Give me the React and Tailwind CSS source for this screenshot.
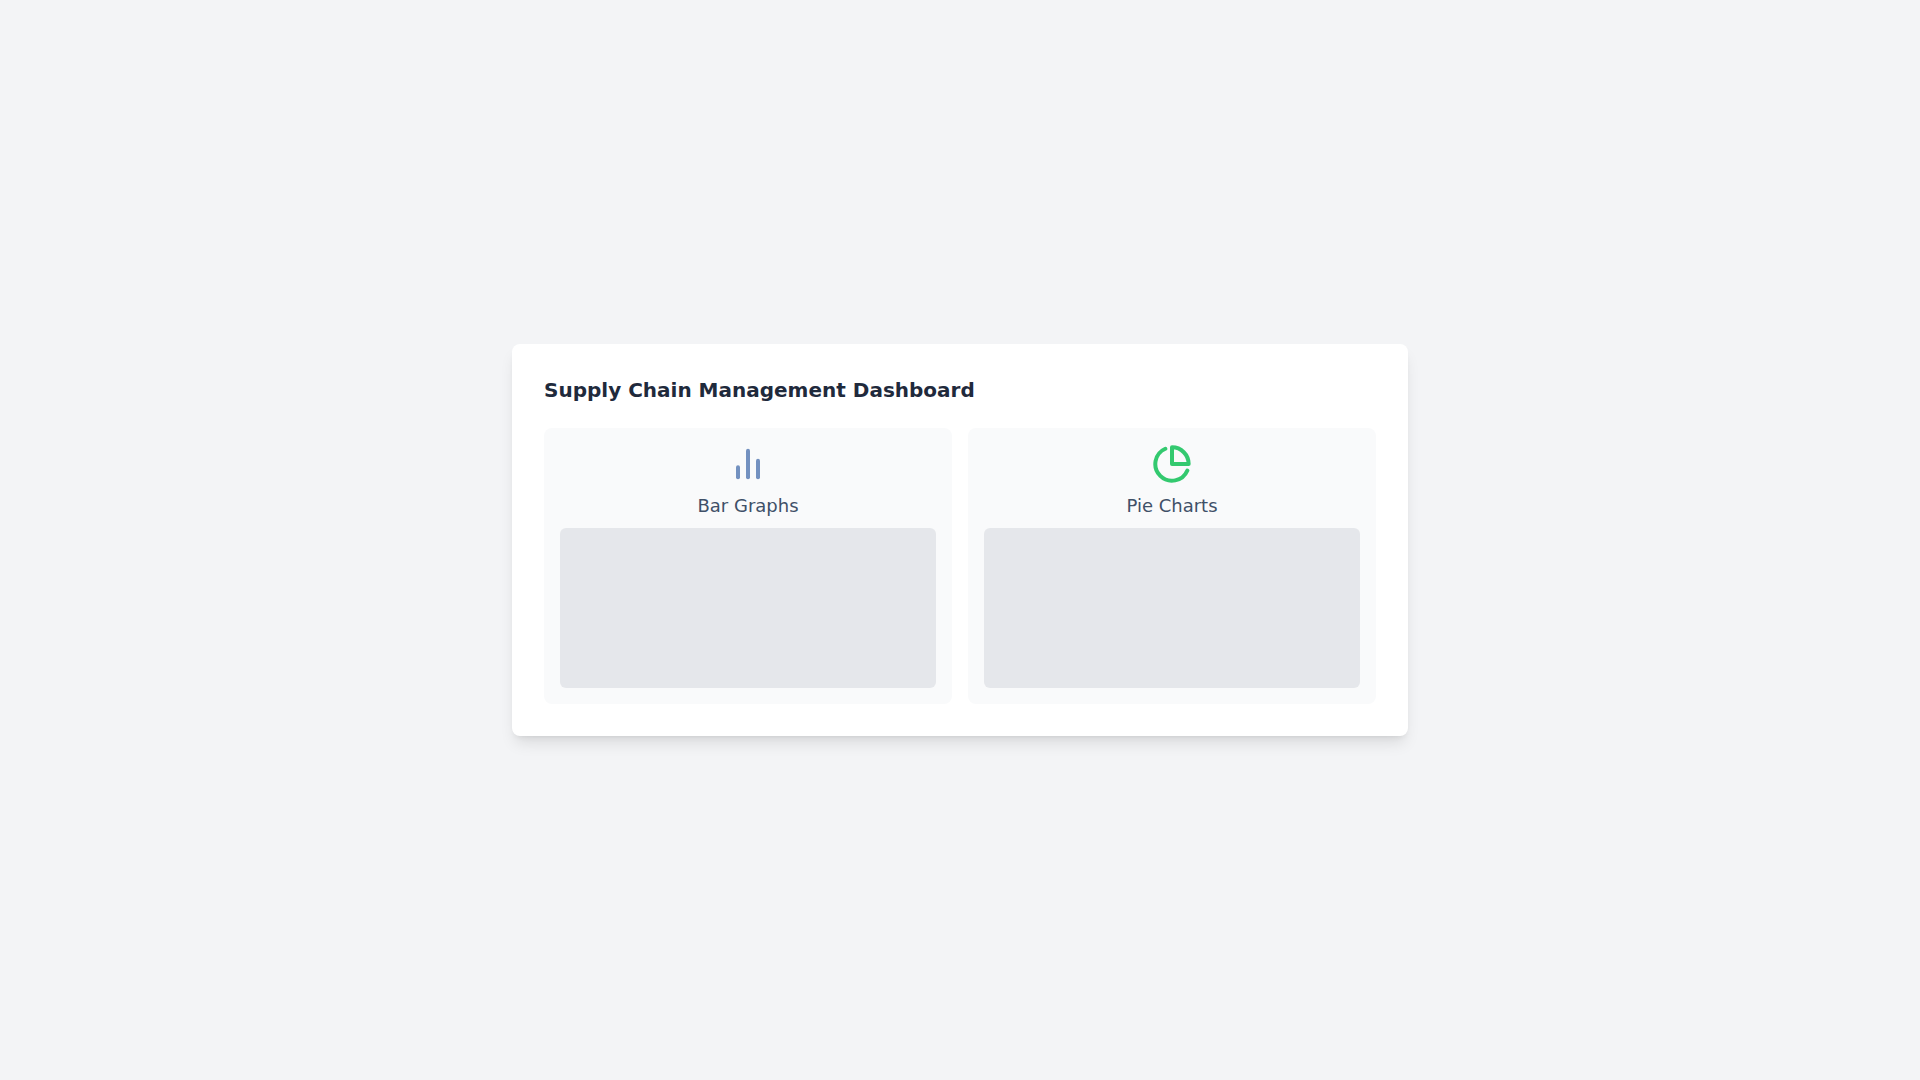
import React from 'react';

const BarIcon = () => (
    <svg className="w-10 h-10 text-[#7391c0]" viewBox="0 0 24 24" fill="none" stroke="currentColor" strokeWidth="2.4" strokeLinecap="round" strokeLinejoin="round">
        <line x1="18" y1="20" x2="18" y2="10" />
        <line x1="12" y1="20" x2="12" y2="4" />
        <line x1="6" y1="20" x2="6" y2="14" />
    </svg>
);

const PieIcon = () => (
    <svg className="w-10 h-10 text-[#33c96f]" viewBox="0 0 24 24" fill="none" stroke="currentColor" strokeWidth="2.4" strokeLinecap="round" strokeLinejoin="round">
        <path d="M21.21 15.89A10 10 0 1 1 8 2.83" />
        <path d="M22 12A10 10 0 0 0 12 2v10z" />
    </svg>
);

const Panel = ({ icon, label }) => (
    <div className="bg-gray-50 rounded-lg p-4 flex flex-col items-center">
        {icon}
        <h3 className="mt-2 text-lg font-normal text-[#3f5068]">{label}</h3>
        <div className="mt-2 w-full h-40 bg-gray-200 rounded-md"></div>
    </div>
);

export default function App() {
    return (
        <div className="min-h-screen bg-gray-100 flex items-center justify-center font-['DejaVu_Sans',sans-serif]">
            <div className="w-full max-w-4xl bg-white rounded-lg shadow-lg p-8">
                <h1 className="text-xl font-bold text-[#1f2a3c] mb-6">Supply Chain Management Dashboard</h1>
                <div className="grid grid-cols-2 gap-4">
                    <Panel icon={<BarIcon />} label="Bar Graphs" />
                    <Panel icon={<PieIcon />} label="Pie Charts" />
                </div>
            </div>
        </div>
    );
}
